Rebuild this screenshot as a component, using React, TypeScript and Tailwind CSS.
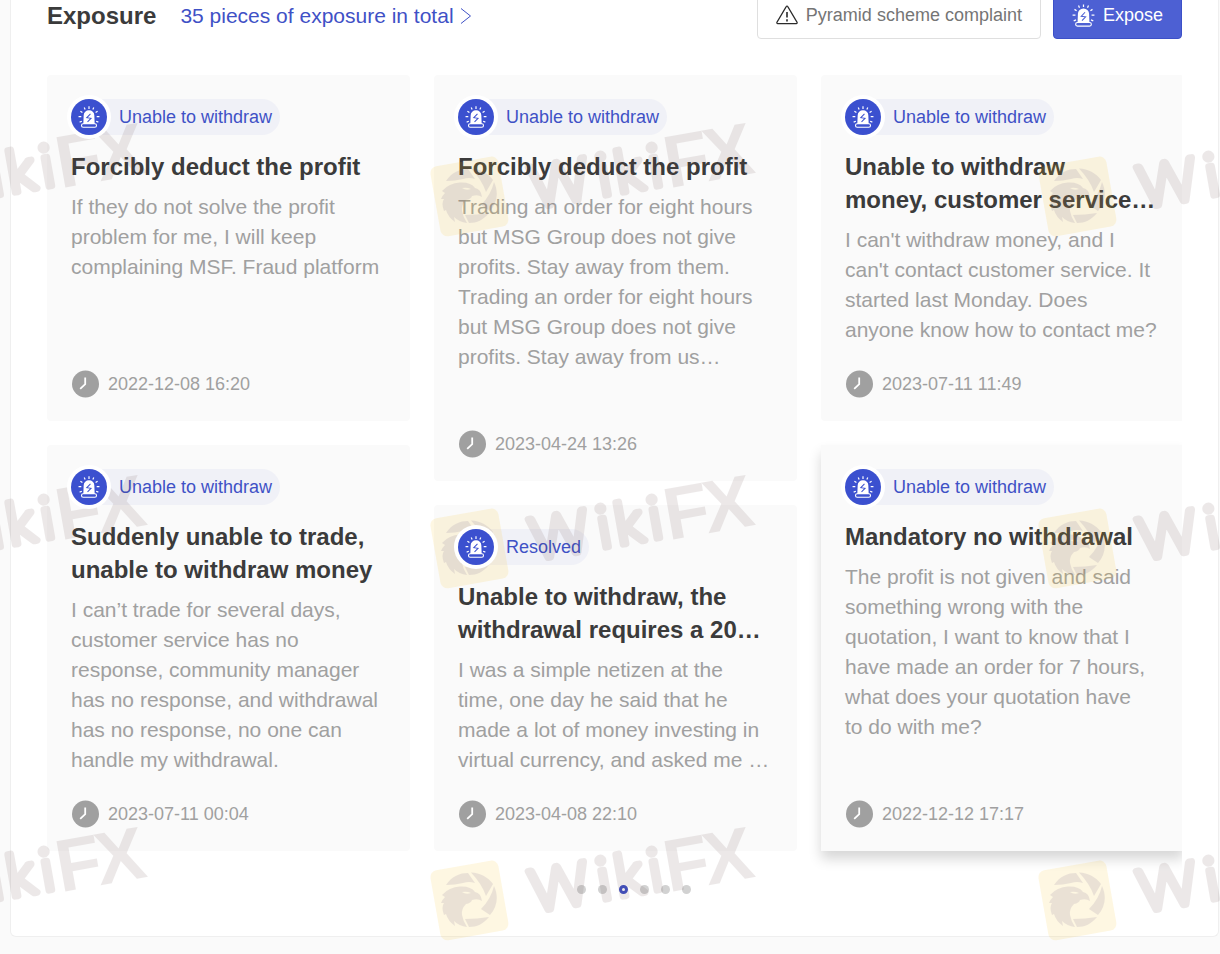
type Complaint = {
  tag: string;
  title: string;
  text: string;
  date: string;
  tall?: boolean;
  raised?: boolean;
};

const COLUMNS: Complaint[][] = [
  [
    {
      tag: 'Unable to withdraw',
      title: 'Forcibly deduct the profit',
      text: 'If they do not solve the profit problem for me, I will keep complaining MSF. Fraud platform',
      date: '2022-12-08 16:20',
    },
    {
      tag: 'Unable to withdraw',
      title: 'Suddenly unable to trade, unable to withdraw money',
      text: 'I can’t trade for several days, customer service has no response, community manager has no response, and withdrawal has no response, no one can handle my withdrawal.',
      date: '2023-07-11 00:04',
      tall: true,
    },
  ],
  [
    {
      tag: 'Unable to withdraw',
      title: 'Forcibly deduct the profit',
      text: 'Trading an order for eight hours but MSG Group does not give profits. Stay away from them. Trading an order for eight hours but MSG Group does not give profits. Stay away from us…',
      date: '2023-04-24 13:26',
      tall: true,
    },
    {
      tag: 'Resolved',
      title: 'Unable to withdraw, the withdrawal requires a 20…',
      text: 'I was a simple netizen at the time, one day he said that he made a lot of money investing in virtual currency, and asked me …',
      date: '2023-04-08 22:10',
    },
  ],
  [
    {
      tag: 'Unable to withdraw',
      title: 'Unable to withdraw money,\u00a0customer service…',
      text: "I can't withdraw money, and I can't contact customer service. It started last Monday. Does anyone know how to contact me?",
      date: '2023-07-11 11:49',
    },
    {
      tag: 'Unable to withdraw',
      title: 'Mandatory no withdrawal',
      text: 'The profit is not given and said something wrong with the quotation, I want to know that I have made an order for 7 hours, what does your quotation have to\u00a0do with me?',
      date: '2022-12-12 17:17',
      tall: true,
      raised: true,
    },
  ],
];

const PAGES = [1, 2, 3, 4, 5, 6];
const ACTIVE_PAGE = 3;

export default function App() {
  return (
    <div className="relative min-h-screen overflow-hidden bg-[#fafafa] pl-[10px] font-['Liberation_Sans',Arial,sans-serif]">
      <section className="mr-px rounded-b-md border border-t-0 border-[#efefef] bg-white pr-9 pb-[42px] pl-9">
        <header className="-mt-[9px] flex h-12 items-center">
          <div className="flex items-center gap-6 pt-[2px]">
            <h2 className="text-[24px] leading-8 font-bold text-[#3b3b3b]">Exposure</h2>
            <a href="#exposure" className="flex items-center gap-1 text-[21px] leading-8 text-[#3f51c6]">
              35 pieces of exposure in total
              <svg width="14" height="18" viewBox="0 0 14 18" fill="none" stroke="#3f51c6">
                <path d="M3 1.5 12.5 9 3 16.5" />
              </svg>
            </a>
          </div>
          <button className="ml-auto flex h-12 items-center gap-2 rounded border border-[#dfdfdf] px-[18px] text-[18px] text-[#757575]">
            <WarningIcon />
            Pyramid scheme complaint
          </button>
          <button className="ml-3 flex h-12 items-center gap-2 rounded border border-[#3c50c8] bg-[#4d60d3] px-[18px] text-[18px] text-white">
            <SirenIcon size={23} bolt="#4d60d3" />
            Expose
          </button>
        </header>

        <div className="overflow-hidden pt-9 pb-6">
          <div className="-mr-[2px] grid grid-cols-3 gap-6">
            {COLUMNS.map((col, i) => (
              <div key={i} className="flex flex-col gap-6">
                {col.map((c) => (
                  <Card key={c.date} item={c} />
                ))}
              </div>
            ))}
          </div>
        </div>

        <nav className="flex justify-center gap-3 pt-[10px] pl-[38px]">
          {PAGES.map((p) => (
            <button
              key={p}
              aria-label={'Page ' + p}
              className={
                p === ACTIVE_PAGE
                  ? 'h-[9px] w-[9px] rounded-full border-[3px] border-[#3f51c6] bg-white'
                  : 'h-[9px] w-[9px] rounded-full bg-[#d2d2d2]'
              }
            />
          ))}
        </nav>
      </section>
      <Watermarks />
    </div>
  );
}

function Card({ item }: { item: Complaint }) {
  return (
    <article
      className={
        'bg-[#fafafa] p-6 ' + (item.raised ? 'shadow-[0_8px_12px_rgba(0,0,0,0.16)]' : 'rounded-sm')
      }
    >
      <div className="flex h-9 items-center">
        <span className="z-10 flex h-9 w-9 items-center justify-center rounded-full bg-[#3b50cf] shadow-[0_0_0_4px_#fff]">
          <SirenIcon size={22} bolt="#3b50cf" />
        </span>
        <span className="-ml-2 flex h-9 items-center rounded-r-full bg-[#f0f1f7] pr-2 pl-5 text-[18px] text-[#3f51c6]">
          {item.tag}
        </span>
      </div>
      <div className={'mt-[15px] ' + (item.tall ? 'min-h-[255px]' : 'min-h-[195px]')}>
        <h3 className="text-[24px] leading-[33px] font-bold text-[#3b3b3b]">{item.title}</h3>
        <p className="mt-[9px] text-[21px] leading-[30px] text-[#a0a0a0]">{item.text}</p>
      </div>
      <div className="mt-[26px] flex h-[26px] items-center gap-[9px] text-[18px] text-[#a0a0a0]">
        <svg width="28" height="28" viewBox="0 0 28 28">
          <circle cx="14.5" cy="14" r="13.5" fill="#a0a0a0" />
          <path d="M14.2 7.5v6.7l-5 4.6" fill="none" stroke="#fff" strokeWidth="1.8" />
        </svg>
        <time>{item.date}</time>
      </div>
    </article>
  );
}

function WarningIcon() {
  return (
    <svg width="22" height="20" viewBox="0 0 22 20" fill="none" stroke="#2a2a2a" strokeWidth="1.2">
      <path d="M10.2 1.6.9 17.4a.9.9 0 0 0 .8 1.3h18.6a.9.9 0 0 0 .8-1.3L11.8 1.6a.9.9 0 0 0-1.6 0z" />
      <path d="M11 7v5.6M11 14.2v2.2" strokeWidth="1.6" />
    </svg>
  );
}

function SirenIcon({ size, bolt }: { size: number; bolt: string }) {
  return (
    <svg width={size} height={size} viewBox="0 0 24 24" fill="none">
      <path
        d="M12 .4v2.8M6.8 1.6l1 2.2M17.2 1.6l-1 2.2M2.6 5.6l2.2 1.5M21.4 5.6l-2.2 1.5M.6 11.6h3M23.4 11.6h-3M1.8 17.6l2.4-1M22.2 17.6l-2.4-1"
        stroke="#fff"
        strokeWidth="1.3"
      />
      <path d="M5.8 19.6 6.2 10a5.8 5.4 0 0 1 11.6 0l.4 9.6z" fill="#fff" />
      <rect x="3.8" y="19.3" width="16.4" height="3.8" rx="1.9" stroke="#fff" strokeWidth="1.2" />
      <path d="m13.6 8.6-4 4.2 4.6.6-3.8 4" stroke={bolt} strokeWidth="1.1" />
    </svg>
  );
}

const MARKS = [197, 549, 901].flatMap((y) => [-139, 469, 1077].map((x) => ({ x, y })));

// Tilted brand stamp repeated over the whole page.
function Watermarks() {
  return (
    <svg className="pointer-events-none absolute inset-0 h-full w-full" aria-hidden="true">
      {MARKS.map(({ x, y }) => (
        <g key={x + ':' + y} transform={`translate(${x} ${y})`}>
          <rect
            x="-34"
            y="-36"
            width="69"
            height="71"
            rx="7"
            fill="#f5c520"
            opacity=".13"
            transform="rotate(-10)"
          />
          <g opacity=".11" fill="#503c78">
            <path d="M-23-16C-17-25-9-28-1-28L6-18Q0-20-6-18Q-14-16-23-16z" />
            <path d="M2-28.5C11-28 19-24 24-17L17-5Q13-17 2-28.5z" />
            <path d="M25-15C30-4 28 6 21 14L12 8Q22-2 25-15z" />
            <path d="M-4 18Q8 18 20 16C14 23 8 26 0 26z" />
            <path
              fillRule="evenodd"
              d="M-27-6Q-20-14-9-14.5Q2-15 6-9Q12-8 13 0Q9-3 3-1Q2 2-3 3Q-8 8-7 14Q-6 20-2 26Q-10 25-15 20L-14 25Q-21 20-23 13L-25 14Q-28 6-25 2L-28 2Q-27-1-24-4zM-7-9Q-3-6 2-8Q-2-10-7-9z"
            />
          </g>
          <g
            opacity=".11"
            fill="#5c3c3c"
            stroke="#5c3c3c"
            strokeLinejoin="round"
            transform="rotate(-10)"
          >
            <text
              x="62 130 148 182"
              y="22"
              fontFamily="Lato, 'Liberation Sans', sans-serif"
              fontSize="58"
              fontWeight="300"
              strokeWidth="7"
            >
              Wiki
            </text>
            <text
              x="198 238"
              y="26"
              fontFamily="'Liberation Sans', Arial, sans-serif"
              fontSize="74"
              fontWeight="bold"
              stroke="none"
            >
              FX
            </text>
          </g>
        </g>
      ))}
    </svg>
  );
}
